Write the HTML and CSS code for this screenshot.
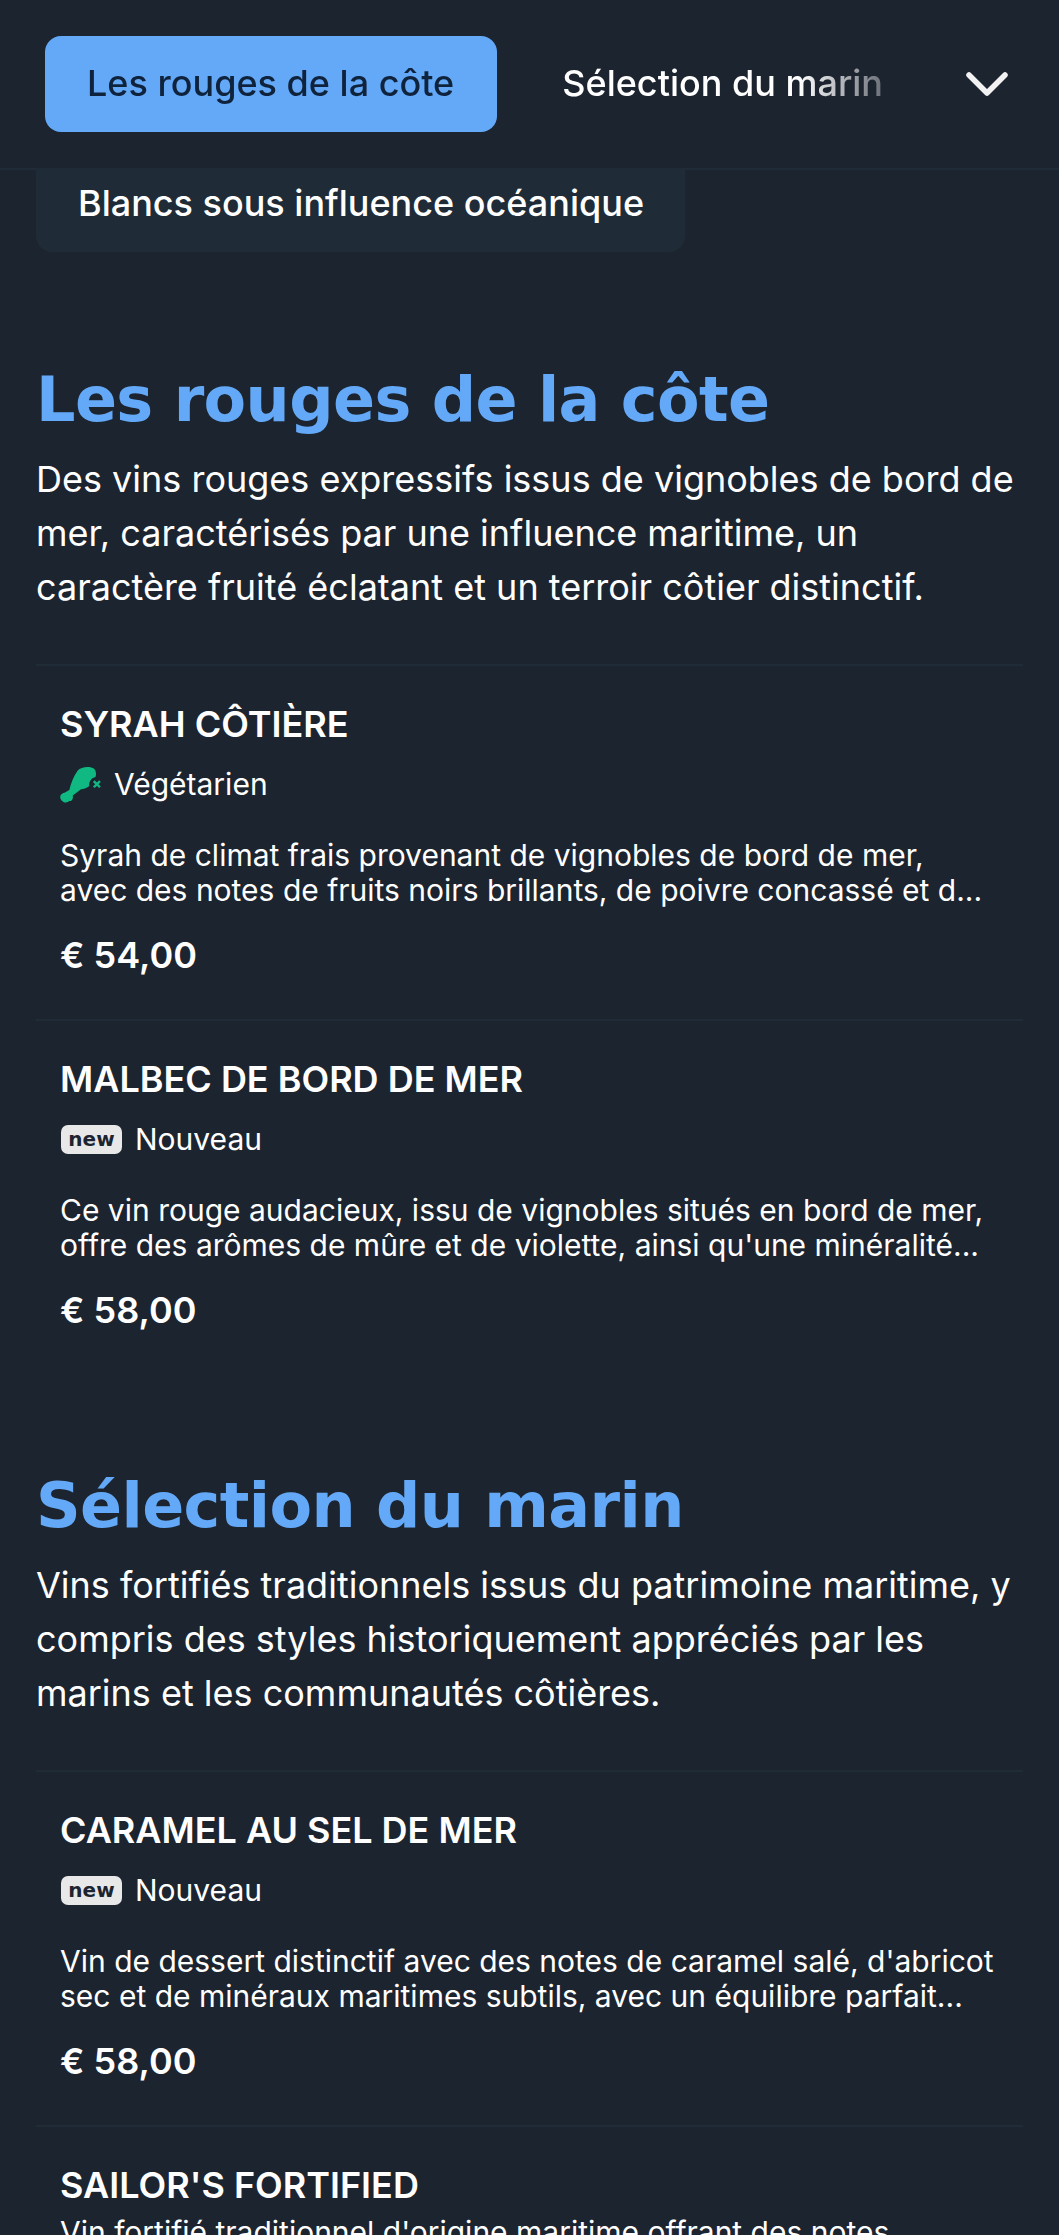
FILE: index.html
```html
<!DOCTYPE html>
<html lang="fr">
<head>
<meta charset="utf-8">
<title>Carte des vins</title>
<link rel="stylesheet" href="styles.css">
</head>
<body>
<header class="topbar">
  <nav class="tabs">
    <a class="tab tab-active">Les rouges de la côte</a>
    <a class="tab tab-plain">Sélection du marin</a>
  </nav>
  <svg class="chevron" viewBox="0 0 44 28" aria-hidden="true"><path d="M4 5 L22 23 L40 5"/></svg>
</header>
<main class="page">
  <div class="chip">Blancs sous influence océanique</div>

  <section class="section">
    <h2 class="section-title">Les rouges de la côte</h2>
    <p class="section-desc">Des vins rouges expressifs issus de vignobles de bord de mer, caractérisés par une influence maritime, un caractère fruité éclatant et un terroir côtier distinctif.</p>
    <article class="item">
      <h3 class="item-name">SYRAH CÔTIÈRE</h3>
      <div class="item-tag">
        <svg class="veg-icon" viewBox="28 46 122 112" aria-hidden="true">
          <path class="veg-fill" d="M82 62 C92 50 118 48 130 56 C136 62 137 72 134 80 C124 82 114 92 116 106 C110 112 100 114 92 116 L68 134 C70 142 66 152 58 150 C52 156 40 156 34 146 C28 136 34 128 44 126 L58 118 C62 100 70 78 82 62 Z"/>
          <path class="veg-cross" d="M129 92 L147 110 M147 92 L129 110"/>
        </svg>
        <span>Végétarien</span>
      </div>
      <p class="item-desc">Syrah de climat frais provenant de vignobles de bord de mer, avec des notes de fruits noirs brillants, de poivre concassé et d...</p>
      <div class="item-price">€ 54,00</div>
    </article>
    <article class="item">
      <h3 class="item-name">MALBEC DE BORD DE MER</h3>
      <div class="item-tag"><span class="new-badge">new</span><span>Nouveau</span></div>
      <p class="item-desc">Ce vin rouge audacieux, issu de vignobles situés en bord de mer, offre des arômes de mûre et de violette, ainsi qu'une minéralité...</p>
      <div class="item-price">€ 58,00</div>
    </article>
  </section>

  <section class="section">
    <h2 class="section-title">Sélection du marin</h2>
    <p class="section-desc">Vins fortifiés traditionnels issus du patrimoine maritime, y compris des styles historiquement appréciés par les marins et les communautés côtières.</p>
    <article class="item">
      <h3 class="item-name">CARAMEL AU SEL DE MER</h3>
      <div class="item-tag"><span class="new-badge">new</span><span>Nouveau</span></div>
      <p class="item-desc">Vin de dessert distinctif avec des notes de caramel salé, d'abricot sec et de minéraux maritimes subtils, avec un équilibre parfait...</p>
      <div class="item-price">€ 58,00</div>
    </article>
    <article class="item">
      <h3 class="item-name">SAILOR'S FORTIFIED</h3>
      <p class="item-desc item-desc-tight">Vin fortifié traditionnel d'origine maritime offrant des notes</p>
    </article>
  </section>
</main>
</body>
</html>
```

FILE: styles.css
```css
* { box-sizing: border-box; }
html, body { margin: 0; height: 2235px; overflow: hidden; }
body {
  background: #1c2430;
  color: #fff;
  font-family: Inter, "Liberation Sans", sans-serif;
}
.topbar {
  position: fixed;
  top: 0; left: 0; right: 0;
  height: 170px;
  z-index: 2;
  display: flex;
  align-items: flex-start;
  padding: 36px 50px 0 45px;
  background: #1c2430;
  border-bottom: 2px solid #1f2c38;
}
.tabs {
  display: flex;
  -webkit-mask-image: linear-gradient(to right, #000 90%, rgba(0,0,0,.35) 100%);
  mask-image: linear-gradient(to right, #000 90%, rgba(0,0,0,.35) 100%);
}
.tab {
  flex: none;
  height: 96px;
  display: flex;
  align-items: center;
  padding: 0 43px 3px 42px;
  font-size: 36px;
  font-weight: 500;
  border-radius: 16px;
  white-space: nowrap;
}
.tab-active { background: #63a9f7; color: #10233d; margin-right: 25px; }
.tab-plain { padding: 0 0 3px 40px; }
.chevron { width: 44px; height: 28px; margin: 34px 0 0 auto; flex: none; }
.chevron path { fill: none; stroke: #f2f2f2; stroke-width: 5.5; stroke-linecap: round; stroke-linejoin: round; }
.page { padding: 0 36px; }
.chip {
  display: flex;
  align-items: center;
  margin-top: 150px;
  width: 649px;
  height: 102px;
  padding: 3px 42px 0;
  background: #1f2c38;
  border-radius: 16px;
  font-size: 36px;
  font-weight: 500;
  white-space: nowrap;
}
.section { margin-bottom: 90px; }
.section:first-of-type { margin-top: 106px; }
.section-title {
  margin: 0 0 10px;
  color: #63a9f7;
  font-family: "DejaVu Sans", sans-serif;
  font-size: 62px;
  line-height: 84px;
  font-weight: 700;
  letter-spacing: -0.6px;
}
.section-desc {
  margin: 0 0 50px;
  font-size: 36px;
  line-height: 54px;
}
.item {
  height: 355px;
  padding: 36px 24px 0;
  border-top: 2px solid #1f2c38;
}
.item-name { margin: 0; font-size: 36px; line-height: 44px; font-weight: 600; }
.item-tag { display: flex; align-items: center; gap: 13px; margin-top: 16px; height: 44px; font-size: 30px; }
.veg-icon { width: 42px; height: 39px; margin-left: -1px; }
.veg-fill { fill: #10b981; }
.veg-cross { fill: none; stroke: #10b981; stroke-width: 7; }
.new-badge {
  width: 61px; height: 29px;
  margin-left: 1px;
  display: flex; align-items: center; justify-content: center;
  background: #e8e8e8;
  color: #1c2430;
  border-radius: 7px;
  font-family: "DejaVu Sans", sans-serif;
  font-size: 20px;
  font-weight: 700;
}
.item-desc { margin: 32px 0 0; font-size: 30px; line-height: 35px; }
.item-desc-tight { margin-top: 8px; }
.item-price { margin-top: 25px; font-size: 36px; line-height: 44px; font-weight: 600; }
```
